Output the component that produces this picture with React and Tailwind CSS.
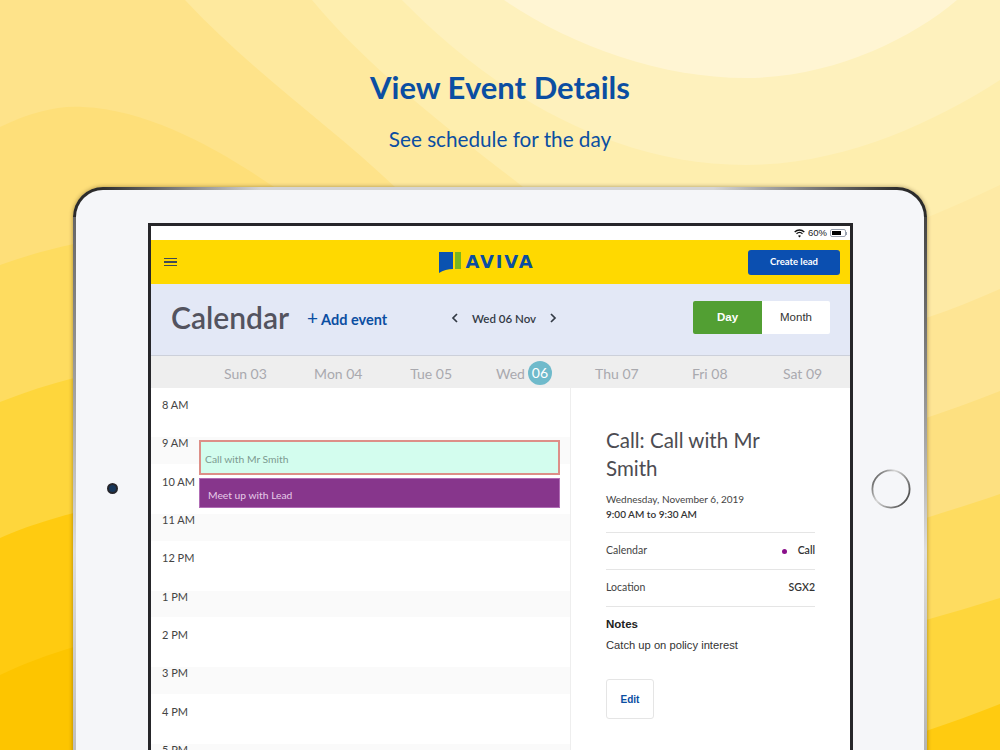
const hours = ["8 AM", "9 AM", "10 AM", "11 AM", "12 PM", "1 PM", "2 PM", "3 PM", "4 PM", "5 PM"];
const days = ["Sun 03", "Mon 04", "Tue 05", "Wed", "Thu 07", "Fri 08", "Sat 09"];

function Background() {
  return (
    <svg className="absolute inset-0 w-full h-full" viewBox="0 0 1000 750" preserveAspectRatio="none">
      <rect width="1000" height="750" fill="#fee38a" />
      <path d="M185 0 C250 70 330 125 395 187 L500 400 L1000 400 L1000 0 Z" fill="#fee99e" />
      <path d="M312 0 C370 70 450 130 523 187 L500 400 L1000 400 L1000 0 Z" fill="#feeeae" />
      <path d="M402 0 C480 80 600 165 746 165 C840 165 930 125 1000 80 L1000 0 Z" fill="#fef1bd" />
      <path d="M504 0 C570 45 660 78 746 78 C830 78 910 40 957 0 Z" fill="#fff5d3" />
      <path d="M0 127 C30 112 60 105 83 107 C150 110 220 150 274 187 L300 400 L0 400 Z" fill="#fedf79" />

      <path d="M500 400 L926 218 C950 208 975 197 1000 185 L1000 750 L500 750 Z" fill="#feeaa5" />
      <path d="M500 400 L926 318 C950 310 975 300 1000 289 L1000 750 L500 750 Z" fill="#fee594" />
      <path d="M500 500 L926 418 C950 410 975 401 1000 391 L1000 750 L500 750 Z" fill="#fde080" />
      <path d="M0 265 C25 256 50 249 74 244 L500 400 L926 518 C950 510 975 503 1000 494 L1000 750 L0 750 Z" fill="#fedc60" />
      <path d="M0 402 C25 392 50 384 74 378 L500 500 L926 620 C950 613 975 606 1000 598 L1000 750 L0 750 Z" fill="#fed63c" />
      <path d="M0 538 C25 527 50 519 74 513 L500 600 L926 731 C950 723 975 714 1000 704 L1000 750 L0 750 Z" fill="#ffcb10" />
      <path d="M0 675 C25 663 50 654 74 647 L500 700 L500 750 L0 750 Z" fill="#fdc500" />
    </svg>
  );
}

function AvivaLogo() {
  return (
    <svg width="22" height="23" viewBox="0 0 22 23">
      <path d="M0 1 H14 V18 C9 18 4 19.5 0 22 Z" fill="#0a52b0" />
      <rect x="14" y="1" width="2" height="17" fill="#ffd900" />
      <rect x="16" y="1" width="6" height="17" fill="#7ab51d" />
    </svg>
  );
}

function Chevron({ right }) {
  return (
    <svg width="8" height="10" viewBox="0 0 8 10" fill="none" stroke="#333a45" strokeWidth="1.7">
      <path d={right ? "M2 1 L6 5 L2 9" : "M6 1 L2 5 L6 9"} />
    </svg>
  );
}

function HomeButton() {
  return (
    <svg className="absolute left-[795px] top-[279px]" width="40" height="40" viewBox="0 0 40 40" fill="none">
      <defs>
        <linearGradient id="ring" x1="0" y1="0" x2="1" y2="0.6">
          <stop offset="0" stopColor="#3a3a3a" />
          <stop offset="0.45" stopColor="#d8d8d8" />
          <stop offset="1" stopColor="#555" />
        </linearGradient>
      </defs>
      <circle cx="20" cy="20" r="18.6" stroke="url(#ring)" strokeWidth="1.8" />
    </svg>
  );
}

function StatusBar() {
  return (
    <div className="h-[14px] bg-white flex items-center justify-end gap-[3px] pr-[3px] text-[9.5px] text-[#222] font-['Liberation_Sans',sans-serif]">
      <svg width="11" height="9" viewBox="0 0 11 9" fill="none" stroke="#111" strokeWidth="1.3">
        <path d="M0.7 3 C3.5 0.3 7.5 0.3 10.3 3" />
        <path d="M2.5 4.8 C4.2 3.2 6.8 3.2 8.5 4.8" />
        <path d="M5.5 8.5 L4 6.7 C4.8 6 6.2 6 7 6.7 Z" fill="#111" stroke="none" />
      </svg>
      <span>60%</span>
      <div className="flex items-center">
        <div className="w-[16px] h-[8px] rounded-[2px] border border-gray-400 p-[1px]">
          <div className="w-[9px] h-full bg-black"></div>
        </div>
        <div className="w-[1px] h-[3px] bg-gray-400"></div>
      </div>
    </div>
  );
}

export default function App() {
  return (
    <div className="relative h-[750px] overflow-hidden font-['Lato',sans-serif]">
      <Background />
      <div className="relative">
        <div className="pt-[66px] h-[187px] text-center text-[#0b4ea2]">
          <h1 className="text-[31px] leading-[42px] font-bold">View Event Details</h1>
          <p className="mt-[16px] text-[20.7px] leading-[30px]">See schedule for the day</p>
        </div>

        <div className="relative ml-[73px] w-[854px] h-[700px] rounded-t-[30px] bg-[linear-gradient(to_right,#2b2b2b_3%,#d5d5d5_22%,#d5d5d5_75%,#2b2b2b_97%)] pt-[3px] px-[3px] shadow-[0_0_4px_rgba(60,40,0,0.45)]">
          <div className="absolute left-0 top-[30px] bottom-0 w-[3px] bg-gradient-to-b from-[#666] via-[#ddd] to-[#aaa]"></div>
          <div className="absolute right-0 top-[30px] bottom-0 w-[3px] bg-gradient-to-b from-[#444] via-[#ddd] to-[#999]"></div>

          <div className="relative h-full rounded-t-[27px] bg-[#f5f6f9] pt-[33px] pl-[72px]">
            <div className="absolute left-[31px] top-[293px] w-[11px] h-[11px] rounded-full bg-[#17365a] border-2 border-[#25252b]"></div>
            <HomeButton />

            <div className="w-[705px] h-[700px] border-[3px] border-[#26262a] bg-white">
              <StatusBar />

              <div className="h-[44px] bg-[#ffd900] flex items-center justify-between pl-[13px] pr-[10px]">
                <div className="w-[13px] flex flex-col gap-[2px]">
                  <div className="h-[1.5px] bg-[#3f4a55]"></div>
                  <div className="h-[1.5px] bg-[#3f4a55]"></div>
                  <div className="h-[1.5px] bg-[#3f4a55]"></div>
                </div>
                <div className="flex items-center gap-[5px] ml-[48px]">
                  <AvivaLogo />
                  <span className="text-[#0b4ea2] text-[18px] leading-none font-bold tracking-[1.8px] font-['DejaVu_Sans',sans-serif]">AVIVA</span>
                </div>
                <button className="w-[92px] h-[25px] rounded-[3px] bg-[#0b4fb0] text-white text-[9.5px] font-bold">Create lead</button>
              </div>

              <div className="h-[72px] bg-[#e3e8f6] border-b border-[#ccd0da] flex items-center pl-[20px] pr-[20px]">
                <span className="text-[30px] font-semibold text-[#53535f] w-[136px] mb-[4px]">Calendar</span>
                <span className="text-[14.5px] font-bold text-[#0b4ea2] w-[144px]"><span className="text-[19px] font-normal leading-none mr-[3px]">+</span>Add event</span>
                <div className="flex items-center gap-[13px] text-[11.5px] font-semibold text-[#333a45] w-[115px] mb-[4px]">
                  <Chevron />
                  <span className="pt-[2px]">Wed 06 Nov</span>
                  <Chevron right />
                </div>
                <div className="ml-auto mb-[4px] flex h-[33px] rounded-[2px] overflow-hidden bg-white text-[11.5px] font-['Liberation_Sans',sans-serif]">
                  <div className="w-[69px] pt-[1px] bg-[#529f33] text-white font-bold flex items-center justify-center">Day</div>
                  <div className="w-[68px] pt-[1px] text-[#333] flex items-center justify-center">Month</div>
                </div>
              </div>

              <div className="h-[32px] bg-[#eeeeee] pl-[48px] pr-[1px] pt-[2px] grid grid-cols-7 items-center text-center text-[14px] text-[#a9a9ae]">
                {days.map((d) => (
                  <div key={d} className="flex items-center justify-center gap-[3px]">
                    {d}
                    {d === "Wed" && (
                      <span className="w-[24px] h-[24px] -mt-[1px] rounded-full bg-[#6fbacb] text-white flex items-center justify-center">06</span>
                    )}
                  </div>
                ))}
              </div>

              <div className="flex">
                <div className="relative w-[419px] pt-[11px] h-[400px] overflow-hidden">
                  {hours.map((h, i) => (
                    <div key={h} className="h-[38.35px]">
                      <div className={i % 2 === 1 ? "h-[26.5px] bg-[#fafafa] pl-[11px] text-[11px] leading-[11px] text-[#444]" : "h-[26.5px] pl-[11px] text-[11px] leading-[11px] text-[#444]"}>{h}</div>
                    </div>
                  ))}
                  <div className="absolute left-[48px] top-[52px] w-[361px] h-[35px] border-2 border-[#dd8f88] bg-[#d3fdee] text-[10.3px] text-[#7c9a90] pl-[4px] pt-[10px]">Call with Mr Smith</div>
                  <div className="absolute left-[48px] top-[90px] w-[361px] h-[30px] border border-[#b06cb5] bg-[#87368c] text-[10.3px] text-[#e6cbe8] pl-[8px] pt-[9px]">Meet up with Lead</div>
                </div>

                <div className="flex-1 border-l border-[#eeeeee] pl-[35px] pr-[35px] pt-[38px]">
                  <h2 className="max-w-[165px] text-[20.5px] leading-[28px] text-[#4c4c52]">Call: Call with Mr Smith</h2>
                  <p className="mt-[10px] text-[10px] leading-[15px] text-[#444]">Wednesday, November 6, 2019</p>
                  <p className="text-[10px] leading-[15px] font-semibold text-[#333]">9:00 AM to 9:30 AM</p>
                  <div className="mt-[10px] h-[38px] border-y border-[#e5e5e5] flex items-center justify-between text-[10.5px] text-[#444]">
                    <span>Calendar</span>
                    <span className="flex items-center gap-[11px] font-semibold text-[#333]"><span className="w-[5px] h-[5px] rounded-full bg-[#8a0f8a]"></span>Call</span>
                  </div>
                  <div className="h-[37px] border-b border-[#e5e5e5] flex items-center justify-between text-[10.5px] text-[#444]">
                    <span>Location</span>
                    <span className="font-semibold text-[#333]">SGX2</span>
                  </div>
                  <div className="font-['Liberation_Sans',sans-serif]">
                    <p className="mt-[10px] text-[11.5px] leading-[14px] font-bold text-[#222]">Notes</p>
                    <p className="mt-[7px] text-[11.2px] leading-[14px] text-[#333]">Catch up on policy interest</p>
                    <button className="mt-[27px] w-[48px] h-[40px] rounded-[3px] border border-[#e5e5e5] text-[#0b4ea2] text-[10px] font-bold">Edit</button>
                  </div>
                </div>
              </div>
            </div>
          </div>
        </div>
      </div>
    </div>
  );
}
